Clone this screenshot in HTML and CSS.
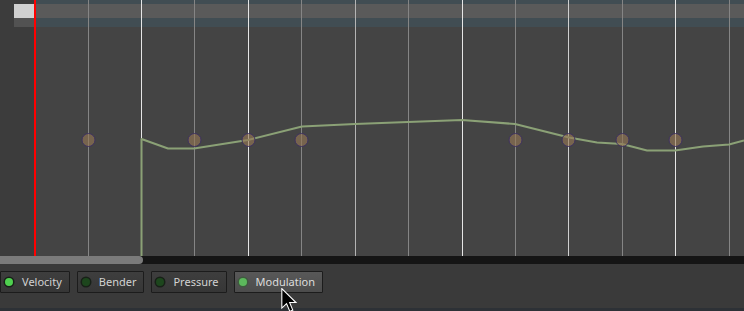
FILE: index.html
```html
<!DOCTYPE html>
<html lang="en">
<head>
    <meta charset="utf-8"/>
    <title>Automation editor</title>
    <link rel="stylesheet" href="styles.css">
</head>
<body>
    <div class="editor">
        <svg class="roll" width="744" height="256" viewBox="0 0 744 256">
            <rect x="0" y="0" width="744" height="256" fill="#444444"/>
            <rect x="0" y="0" width="34" height="256" fill="#3c3c3c"/>
            <!-- timeline header -->
            <rect x="36" y="0" width="708" height="4" fill="#414d53"/>
            <rect x="36" y="4" width="708" height="14" fill="#5a5a5a"/>
            <rect x="36" y="18" width="708" height="9" fill="#414d53"/>
            <rect x="14" y="4" width="20" height="14" fill="#d0d0d0"/>
            <rect x="14" y="18" width="20" height="9" fill="#525252"/>
            <!-- beat lines -->
            <rect x="88" y="0" width="1" height="256" fill="#858585"/>
            <rect x="141" y="0" width="1" height="256" fill="#e6e6e6"/>
            <rect x="194" y="0" width="1" height="256" fill="#858585"/>
            <rect x="248" y="0" width="1" height="256" fill="#e6e6e6"/>
            <rect x="301" y="0" width="1" height="256" fill="#858585"/>
            <rect x="355" y="0" width="1" height="256" fill="#b4b4b4"/>
            <rect x="408" y="0" width="1" height="256" fill="#858585"/>
            <rect x="462" y="0" width="1" height="256" fill="#e6e6e6"/>
            <rect x="515" y="0" width="1" height="256" fill="#858585"/>
            <rect x="568" y="0" width="1" height="256" fill="#d0d0d0"/>
            <rect x="622" y="0" width="1" height="256" fill="#858585"/>
            <rect x="675" y="0" width="1" height="256" fill="#e6e6e6"/>
            <rect x="729" y="0" width="1" height="256" fill="#858585"/>
            <!-- play position -->
            <rect x="34" y="0" width="2" height="256" fill="#ff0000"/>
            <!-- modulation curve -->
            <polyline fill="none" stroke="#8ba176" stroke-width="2" stroke-linejoin="round"
                points="141.5,256 141.5,139 168,148.5 194,148.5 248,140 302,126.5 355,124 408,122 462,120 515,124 569,137.5 597,142.5 622,144 647,150.5 675,150.5 703,146.5 729,144.5 744,140.5"/>
            <!-- note markers -->
            <g fill="rgba(150,120,84,0.62)" stroke="#3e3260" stroke-width="1">
                <circle cx="88.5" cy="140" r="6.5"/>
                <circle cx="194.5" cy="140" r="6.5"/>
                <circle cx="248.5" cy="140" r="6.5"/>
                <circle cx="301.5" cy="140" r="6.5"/>
                <circle cx="515.5" cy="140" r="6.5"/>
                <circle cx="568.5" cy="140" r="6.5"/>
                <circle cx="622.5" cy="140" r="6.5"/>
                <circle cx="675.5" cy="140" r="6.5"/>
            </g>
        </svg>
        <div class="hscroll">
            <div class="hscroll-thumb"></div>
        </div>
        <div class="toolbar">
            <button class="tab"><span class="led on"></span>Velocity</button>
            <button class="tab"><span class="led"></span>Bender</button>
            <button class="tab"><span class="led"></span>Pressure</button>
            <button class="tab active"><span class="led on"></span>Modulation</button>
        </div>
        <div class="statusbar"></div>
        <svg class="pointer" width="17" height="26" viewBox="0 0 14 22">
            <path d="M0.5 0.5 L0.5 17 L4.5 13.2 L7.3 19.8 L9.8 18.7 L7.1 12.3 L12.5 12.3 Z" fill="#000" stroke="#fff" stroke-width="0.9"/>
        </svg>
    </div>
</body>
</html>
```

FILE: styles.css
```css
body {
    margin: 0;
    padding: 0;
    background-color: #3a3a3a;
    font-family: "Noto Sans", "Open Sans", sans-serif;
}
.editor {
    position: relative;
    width: 744px;
    height: 311px;
    overflow: hidden;
    display: flex;
    flex-direction: column;
}
.roll {
    display: block;
    flex-shrink: 0;
}
.hscroll {
    height: 8px;
    flex-shrink: 0;
    background-color: #151515;
    display: flex;
}
.hscroll-thumb {
    width: 143px;
    background-color: #7b7b7b;
    border-radius: 0 4px 4px 0;
}
.toolbar {
    display: flex;
    align-items: flex-start;
    gap: 7px;
    padding-top: 7px;
    height: 44px;
    flex-shrink: 0;
    box-sizing: border-box;
    background-color: #3a3a3a;
}
.tab {
    display: flex;
    align-items: center;
    height: 22px;
    margin: 0;
    padding: 0 7px 0 4px;
    border: 1px solid #1c1c1c;
    border-radius: 1px;
    background: linear-gradient(#3e3e3e, #363636);
    color: #d2d2d2;
    font-family: "Noto Sans", "Open Sans", sans-serif;
    font-size: 11px;
    line-height: 14px;
    cursor: pointer;
    box-sizing: border-box;
}
.tab.active {
    background: linear-gradient(#585858, #4c4c4c);
    color: #dcdcdc;
}
.led {
    width: 8px;
    height: 8px;
    border-radius: 50%;
    background-color: #1d461d;
    box-shadow: 0 0 0 1.5px #182018;
    margin-right: 9px;
}
.led.on {
    background-color: #4fd04f;
}
.tab.active .led.on {
    background-color: #5cb85c;
    box-shadow: 0 0 0 1.5px #3f5a3f;
}
.statusbar {
    flex: 1;
    background-color: #2d3136;
}
.pointer {
    position: absolute;
    left: 281px;
    top: 288px;
}
```
